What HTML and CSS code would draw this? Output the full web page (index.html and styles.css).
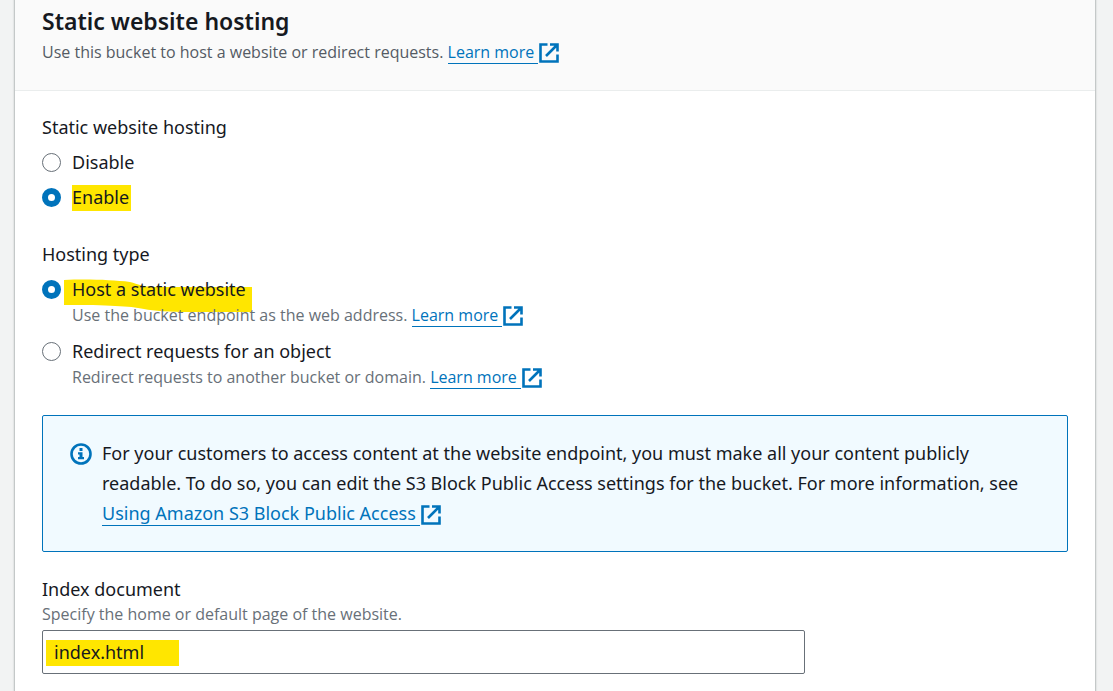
FILE: index.html
```html
<!DOCTYPE html>
<html lang="en">
<head>
<meta charset="utf-8">
<meta name="viewport" content="width=device-width, initial-scale=1">
<title>Static website hosting</title>
<link rel="stylesheet" href="styles.css">
</head>
<body>
<svg class="sprite" aria-hidden="true">
  <symbol id="external" viewBox="0 0 20 20">
    <path d="M8.5 1.5H1.5V18.5H18.5V11.5M11 1.5H18.5V8.5M18 2L7 13" fill="none" stroke="currentColor" stroke-width="2.6"/>
  </symbol>
</svg>
<main class="panel">
  <header class="panel-header">
    <h2 class="title">Static website hosting</h2>
    <p class="hint hint-dark">Use this bucket to host a website or redirect requests. <a class="link" href="#hosting"><span class="link-text">Learn more </span><svg class="external" aria-hidden="true"><use href="#external"/></svg></a></p>
  </header>
  <form class="panel-body">
    <fieldset class="group">
      <legend class="label">Static website hosting</legend>
      <div class="options">
        <div class="option">
          <input class="radio" type="radio" name="hosting" id="disable">
          <label class="option-label" for="disable">Disable</label>
        </div>
        <div class="option">
          <input class="radio" type="radio" name="hosting" id="enable" checked>
          <label class="option-label" for="enable"><span class="mark">Enable</span></label>
        </div>
      </div>
    </fieldset>
    <fieldset class="group">
      <legend class="label">Hosting type</legend>
      <div class="options options-wide">
        <div class="option">
          <input class="radio" type="radio" name="type" id="static" checked>
          <div class="option-content">
            <svg class="stroke" viewBox="0 0 188 34" preserveAspectRatio="none" aria-hidden="true"><path d="M0 1C25 0 48 1 66 3C74 5 80 8 88 8H188V33H125C105 33 90 32 80 30C65 27 45 26 0 26Z" fill="#ffe600"/></svg>
            <label class="option-label" for="static">Host a static website</label>
            <p class="hint">Use the bucket endpoint as the web address. <a class="link" href="#endpoint"><span class="link-text">Learn more </span><svg class="external" aria-hidden="true"><use href="#external"/></svg></a></p>
          </div>
        </div>
        <div class="option">
          <input class="radio" type="radio" name="type" id="redirect">
          <div class="option-content">
            <label class="option-label" for="redirect">Redirect requests for an object</label>
            <p class="hint">Redirect requests to another bucket or domain. <a class="link" href="#redirects"><span class="link-text">Learn more </span><svg class="external" aria-hidden="true"><use href="#external"/></svg></a></p>
          </div>
        </div>
      </div>
    </fieldset>
    <section class="alert">
      <svg class="info" viewBox="0 0 22 22" aria-hidden="true"><circle cx="11" cy="11" r="9.5" fill="none" stroke="currentColor" stroke-width="2.6"/><path d="M9.5 5H12.5V8H9.5ZM8 9.2H12.5V14H14V16.2H8V14H9.5V11.4H8Z" fill="currentColor"/></svg>
      <p class="alert-text">For your customers to access content at the website endpoint, you must make all your content publicly readable. To do so, you can edit the S3 Block Public Access settings for the bucket. For more information, see <a class="link" href="#access"><span class="link-text">Using Amazon S3 Block Public Access </span><svg class="external" aria-hidden="true"><use href="#external"/></svg></a></p>
    </section>
    <div class="field">
      <label class="label" for="index">Index document</label>
      <p class="hint" id="index-hint">Specify the home or default page of the website.</p>
      <input class="text-box" type="text" id="index" value="index.html" aria-describedby="index-hint">
    </div>
  </form>
</main>
</body>
</html>
```
FILE: styles.css
```css
* { box-sizing: border-box; }

body {
  margin: 0;
  padding: 0 17px 0 14px;
  background: #f2f3f3;
  color: #16191f;
  font: 18px/28px "Noto Sans", "Open Sans", sans-serif;
}

p, h2 { margin: 0; }

.sprite { display: none; }

.panel {
  min-height: 100vh;
  background: #fff;
  border: solid #c4c8c8;
  border-width: 0 1px;
  box-shadow: 0 0 1px 1px #e4e6e6;
}

.panel-header {
  padding: 7px 27px 26px;
  background: #fafafa;
  border-bottom: 1px solid #eaeded;
}

.title {
  margin-bottom: 5px;
  font-size: 23px;
  line-height: 28px;
  font-weight: 600;
}

.hint {
  color: #687078;
  font-family: "Open Sans", "Noto Sans", sans-serif;
  font-size: 16px;
  line-height: 24px;
}

.hint-dark { color: #545b64; }

.link {
  color: #0073bb;
  text-decoration: none;
}

.link-text {
  border-bottom: 1px solid #0073bb;
  white-space: pre-wrap;
}

.external {
  width: 20px;
  height: 20px;
  margin-left: 1px;
  vertical-align: -5px;
}

.hint .external { margin-top: -4px; }

.panel-body { padding: 22px 27px 17px; }

.group {
  min-width: 0;
  margin: 0 0 29px;
  padding: 0;
  border: 0;
}

.label {
  display: block;
  padding: 0;
}

.options {
  display: grid;
  gap: 7px;
  padding-top: 7px;
}

.options-wide { gap: 10px; }

.option {
  display: flex;
  align-items: flex-start;
  gap: 11px;
}

.option-content { position: relative; }

.option-label { position: relative; display: block; }

.option-content .hint { position: relative; }

.radio {
  appearance: none;
  flex: none;
  width: 19px;
  height: 19px;
  margin: 5px 0 0;
  background: #fff;
  border: 1px solid #687078;
  border-radius: 50%;
}

.radio:checked { border: 6px solid #0073bb; }

.mark {
  display: block;
  padding-right: 2px;
  background: linear-gradient(#ffe600, #ffe600) 0 2px / 100% 26px no-repeat;
}

.stroke {
  position: absolute;
  left: -8px;
  top: 4px;
  width: 188px;
  height: 34px;
}

.alert {
  display: flex;
  gap: 10px;
  margin: -3px 0 23px;
  padding: 22px 27px 23px;
  background: #f1faff;
  border: 1px solid #0073bb;
  border-radius: 2px;
}

.info {
  flex: none;
  width: 22px;
  height: 22px;
  margin-top: 5px;
  color: #0073bb;
}

.alert-text { line-height: 30px; }

.field .hint { line-height: 22px; }

.text-box {
  display: block;
  width: calc(75% - 7px);
  height: 44px;
  margin-top: 5px;
  padding: 0 11px;
  border: 1px solid #687078;
  border-radius: 2px;
  background: linear-gradient(#ffe600, #ffe600) 3px 9px / 133px 26px no-repeat #fff;
  color: inherit;
  font: inherit;
}
```
